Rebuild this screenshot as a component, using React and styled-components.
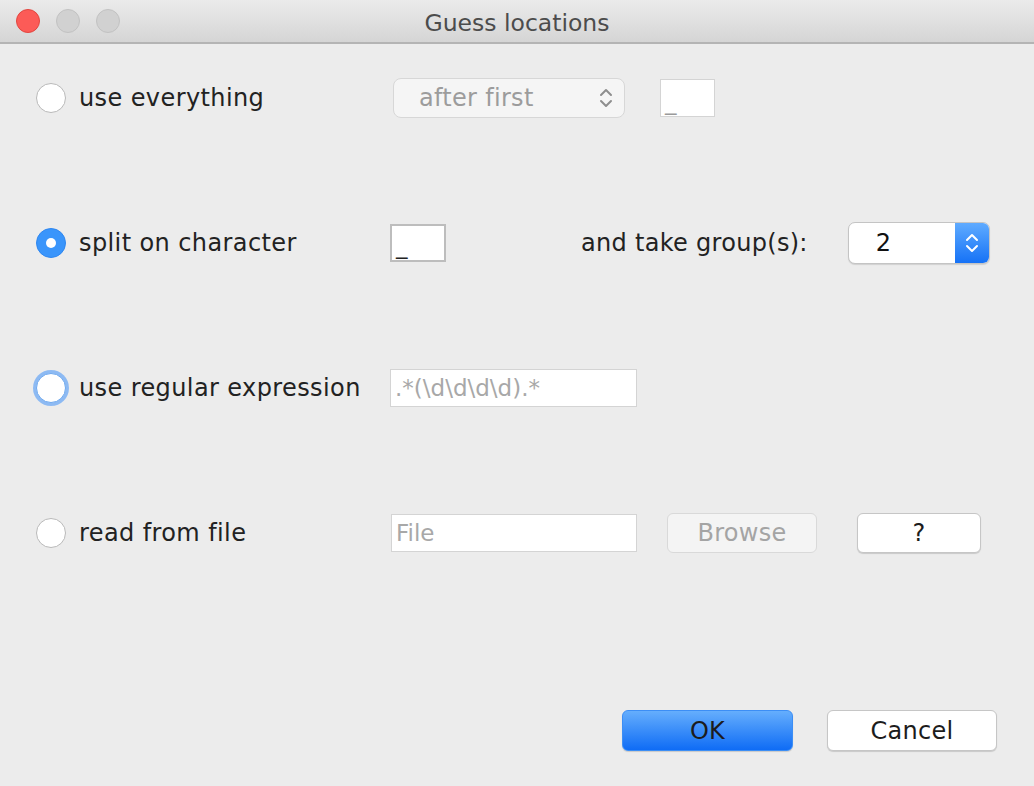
import React from 'react';
import styled, { createGlobalStyle } from 'styled-components';

const GlobalStyle = createGlobalStyle`
  html, body {
    margin: 0;
    padding: 0;
    background: #ececec;
  }
  body {
    font-family: "DejaVu Sans", "Liberation Sans", sans-serif;
  }
`;

const Window = styled.div`
  width: 1034px;
  height: 786px;
  display: flex;
  flex-direction: column;
  background: #ececec;
  overflow: hidden;
`;

const TitleBar = styled.div`
  height: 42px;
  flex-shrink: 0;
  display: flex;
  align-items: center;
  position: relative;
  padding-left: 16px;
  gap: 16px;
  background: linear-gradient(#ebebeb, #d5d5d5);
  border-bottom: 2px solid #b4b4b4;
`;

const Light = styled.span`
  width: 22px;
  height: 22px;
  border-radius: 50%;
  background: ${p => (p.$red ? '#fc5b57' : '#d1d1d1')};
  border: 1px solid ${p => (p.$red ? '#e2463f' : '#c2c2c2')};
`;

const Title = styled.div`
  position: absolute;
  left: 0;
  right: 0;
  top: 9px;
  text-align: center;
  font-size: 23.5px;
  color: #4c4c4c;
  pointer-events: none;
`;

const Body = styled.div`
  flex: 1;
  display: flex;
  flex-direction: column;
  padding: 34px 37px 35px 36px;
`;

const Rows = styled.div`
  display: flex;
  flex-direction: column;
  gap: 105px;
`;

const Row = styled.div`
  height: 40px;
  display: flex;
  align-items: center;
`;

const Choice = styled.label`
  width: 354px;
  flex-shrink: 0;
  display: flex;
  align-items: center;
  gap: 13px;
  font-size: 24px;
  letter-spacing: 0.4px;
  color: #222;
  white-space: nowrap;
`;

const Radio = styled.span`
  width: 30px;
  height: 30px;
  border-radius: 50%;
  box-sizing: border-box;
  flex-shrink: 0;
  display: flex;
  align-items: center;
  justify-content: center;
  background: ${p => (p.$checked ? '#3a95fb' : '#fff')};
  border: 1px solid ${p => (p.$checked ? '#2f87f0' : p.$focus ? '#6fa9ee' : '#b9b9b9')};
  box-shadow: ${p => (p.$focus ? '0 0 0 3px rgba(110, 170, 245, 0.75)' : 'none')};

  &::after {
    content: '';
    display: ${p => (p.$checked ? 'block' : 'none')};
    width: 10px;
    height: 10px;
    border-radius: 50%;
    background: #fff;
  }
`;

const Select = styled.div`
  margin-left: ${p => p.$ml || 0}px;
  width: ${p => p.$w}px;
  height: 40px;
  box-sizing: border-box;
  display: flex;
  align-items: center;
  justify-content: space-between;
  padding: 0 10px 0 25px;
  background: #f5f5f5;
  border: 1px solid #d7d7d7;
  border-radius: 8px;
  font-size: 24px;
  letter-spacing: 0.3px;
  color: #9c9c9c;
`;

const Field = styled.div`
  margin-left: ${p => p.$ml || 0}px;
  width: ${p => p.$w}px;
  height: 38px;
  box-sizing: border-box;
  display: flex;
  align-items: center;
  padding: 0 4px;
  background: #fff;
  border: ${p => (p.$strong ? '2px solid #bdbdbd' : '1px solid #d4d4d4')};
  font-size: 23px;
  color: ${p => (p.$dim ? '#a8a8a8' : '#222')};
  white-space: nowrap;
`;

const Underscore = styled.span`
  align-self: flex-end;
  padding-bottom: 2px;
  line-height: 1;
  color: ${p => (p.$dim ? '#9a9a9a' : '#222')};
`;

const Text = styled.span`
  margin-left: ${p => p.$ml || 0}px;
  font-size: 24px;
  letter-spacing: 0.3px;
  color: #222;
`;

const Spinner = styled.div`
  margin-left: ${p => p.$ml || 0}px;
  width: 142px;
  height: 42px;
  box-sizing: border-box;
  display: flex;
  border: 1px solid #c4c4c4;
  border-radius: 7px;
  background: #fff;
  overflow: hidden;
  box-shadow: 0 1px 1px rgba(0, 0, 0, 0.12);
`;

const SpinnerValue = styled.span`
  flex: 1;
  display: flex;
  align-items: center;
  padding-left: 27px;
  font-size: 24px;
  color: #111;
`;

const SpinnerArrows = styled.span`
  width: 34px;
  display: flex;
  align-items: center;
  justify-content: center;
  background: linear-gradient(#5fabff, #1672f6);
`;

const Button = styled.div`
  margin-left: ${p => p.$ml || 0}px;
  width: ${p => p.$w}px;
  height: ${p => p.$h || 40}px;
  box-sizing: border-box;
  display: flex;
  align-items: center;
  justify-content: center;
  border-radius: 6px;
  font-size: 24px;
  letter-spacing: 0.3px;
  color: ${p => (p.$disabled ? '#a4a4a4' : '#1c1c1c')};
  background: ${p =>
    p.$primary ? 'linear-gradient(#65aefd, #0f6cf5)' : p.$disabled ? '#f4f4f4' : '#fff'};
  border: 1px solid ${p => (p.$primary ? '#3c8ef5' : p.$disabled ? '#d9d9d9' : '#c6c6c6')};
  box-shadow: ${p => (p.$disabled ? 'none' : '0 1px 1px rgba(0, 0, 0, 0.15)')};
`;

const Footer = styled.div`
  margin-top: auto;
  display: flex;
  justify-content: flex-end;
  gap: 34px;
`;

const Chevrons = ({ color }) => (
  <svg width="16" height="24" viewBox="0 0 16 24" fill="none" stroke={color} strokeWidth="2" strokeLinecap="round" strokeLinejoin="round">
    <path d="M3 9 L8 4 L13 9" />
    <path d="M3 15 L8 20 L13 15" />
  </svg>
);

export default function App() {
  return (
    <>
      <GlobalStyle />
      <Window>
        <TitleBar>
          <Light $red />
          <Light />
          <Light />
          <Title>Guess locations</Title>
        </TitleBar>
        <Body>
          <Rows>
            <Row>
              <Choice>
                <Radio />
                use everything
              </Choice>
              <Select $ml={3} $w={232}>
                after first
                <Chevrons color="#8e8e8e" />
              </Select>
              <Field $ml={35} $w={55}>
                <Underscore $dim>_</Underscore>
              </Field>
            </Row>
            <Row>
              <Choice>
                <Radio $checked />
                split on character
              </Choice>
              <Field $w={56} $strong>
                <Underscore>_</Underscore>
              </Field>
              <Text $ml={135}>and take group(s):</Text>
              <Spinner $ml={40}>
                <SpinnerValue>2</SpinnerValue>
                <SpinnerArrows>
                  <Chevrons color="#fff" />
                </SpinnerArrows>
              </Spinner>
            </Row>
            <Row>
              <Choice>
                <Radio $focus />
                use regular expression
              </Choice>
              <Field $w={247} $dim>
                .*(\d\d\d\d).*
              </Field>
            </Row>
            <Row>
              <Choice>
                <Radio />
                read from file
              </Choice>
              <Field $ml={1} $w={246} $dim>
                File
              </Field>
              <Button $ml={30} $w={150} $disabled>
                Browse
              </Button>
              <Button $ml={40} $w={124}>
                ?
              </Button>
            </Row>
          </Rows>
          <Footer>
            <Button $w={171} $h={41} $primary>
              OK
            </Button>
            <Button $w={170} $h={41}>
              Cancel
            </Button>
          </Footer>
        </Body>
      </Window>
    </>
  );
}
